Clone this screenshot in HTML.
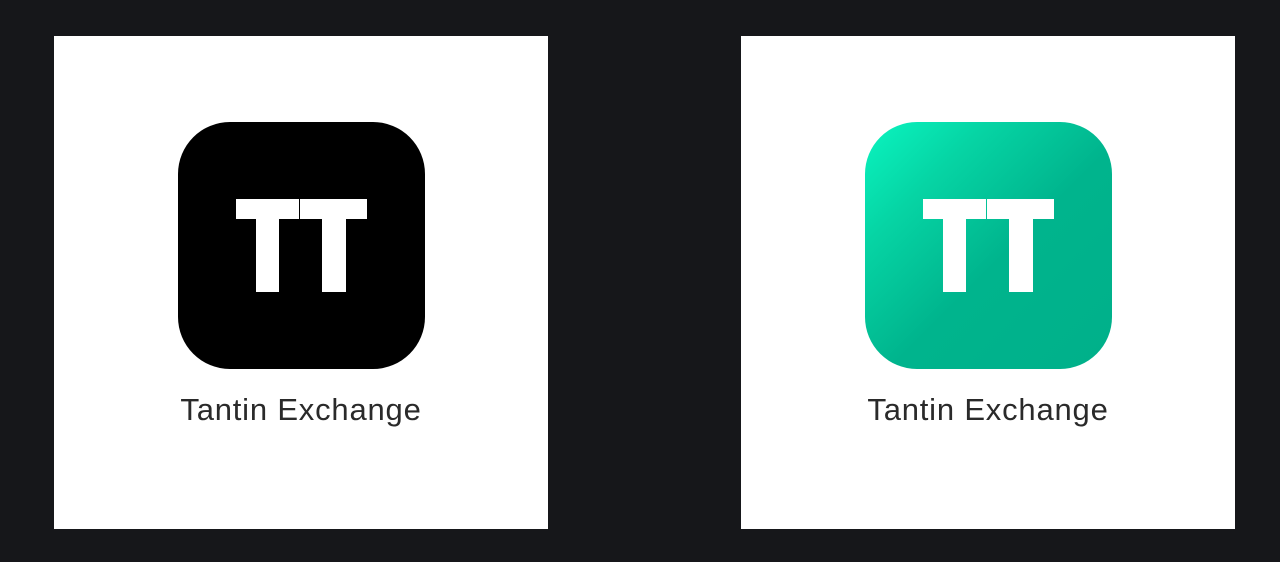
<!DOCTYPE html>
<html><head><style>
body{margin:0;width:1280px;height:562px;background:#16171a;position:relative;overflow:hidden;font-family:"Liberation Sans",sans-serif}
.card{position:absolute;top:36px;width:494px;height:493px;background:#fff}
.icon{position:absolute;left:124px;top:86px;width:247px;height:247px;border-radius:52px}
.b{position:absolute;background:#fff}
.t{position:absolute;left:0;width:100%;top:356px;text-align:center;font-size:31px;letter-spacing:0.8px;color:#2a2a2a;line-height:36px}
</style></head><body>
<div class="card" style="left:54px">
 <div class="icon" style="background:#000">
  <div class="b" style="left:58px;top:77px;width:63px;height:20px"></div>
  <div class="b" style="left:78px;top:77px;width:23px;height:93px"></div>
  <div class="b" style="left:122px;top:77px;width:67px;height:20px"></div>
  <div class="b" style="left:144px;top:77px;width:24px;height:93px"></div>
 </div>
 <div class="t">Tantin Exchange</div>
</div>
<div class="card" style="left:741px">
 <div class="icon" style="background:linear-gradient(135deg,#0af5c0 0%,#06d4a4 25%,#00b48d 55%,#00b08a 100%)">
  <div class="b" style="left:58px;top:77px;width:63px;height:20px"></div>
  <div class="b" style="left:78px;top:77px;width:23px;height:93px"></div>
  <div class="b" style="left:122px;top:77px;width:67px;height:20px"></div>
  <div class="b" style="left:144px;top:77px;width:24px;height:93px"></div>
 </div>
 <div class="t">Tantin Exchange</div>
</div>
</body></html>
